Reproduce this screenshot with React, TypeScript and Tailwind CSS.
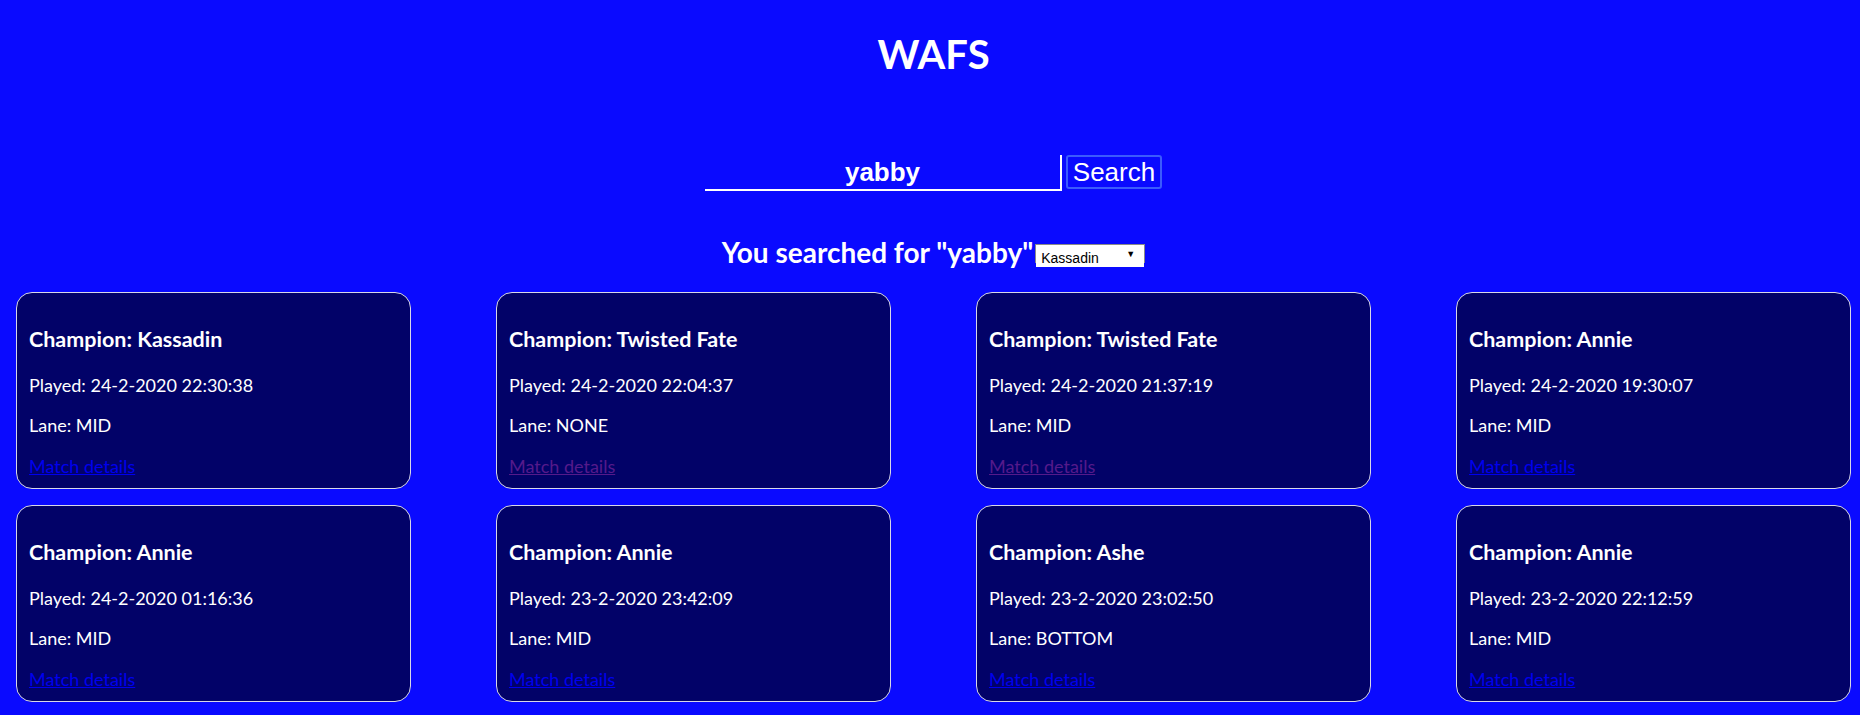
import React from "react";

const matches = [
  { champion: "Kassadin", played: "24-2-2020 22:30:38", lane: "MID", visited: false },
  { champion: "Twisted Fate", played: "24-2-2020 22:04:37", lane: "NONE", visited: true },
  { champion: "Twisted Fate", played: "24-2-2020 21:37:19", lane: "MID", visited: true },
  { champion: "Annie", played: "24-2-2020 19:30:07", lane: "MID", visited: false },
  { champion: "Annie", played: "24-2-2020 01:16:36", lane: "MID", visited: false },
  { champion: "Annie", played: "23-2-2020 23:42:09", lane: "MID", visited: false },
  { champion: "Ashe", played: "23-2-2020 23:02:50", lane: "BOTTOM", visited: false },
  { champion: "Annie", played: "23-2-2020 22:12:59", lane: "MID", visited: false },
];

const App = () => {
  return (
    <div className="min-h-[715px] w-full bg-[#0a0aff] pl-[16px] pr-[9px] pt-[30px] text-white font-['Lato',sans-serif]">
      {/* Titel */}
      <h1 className="text-center text-[40px] font-bold leading-[48px]">WAFS</h1>

      {/* Zoekformulier */}
      <form className="mt-[77px] flex items-start justify-center font-['Liberation_Sans',Arial,sans-serif]">
        <input
          type="text"
          defaultValue="yabby"
          className="h-[36px] w-[357px] border-b-2 border-r-2 border-white bg-transparent text-center text-[26px] font-bold text-white outline-none"
        />
        <button
          type="button"
          className="ml-[4px] h-[34px] w-[96px] rounded-[3px] border-2 border-[#3b5bfd] text-[26px] leading-[28px] text-white"
        >
          Search
        </button>
      </form>

      {/* Resultaat kop */}
      <div className="mt-[45px] flex items-baseline justify-center">
        <h2 className="text-[28px] font-bold leading-[32px]">You searched for "yabby"</h2>
        <div className="relative ml-[2px] h-[19px] w-[110px] border border-[#8a8a8a] bg-white">
          <select
            defaultValue="Kassadin"
            className="h-full w-full appearance-none bg-white pl-[5px] text-[14px] leading-[17px] text-black outline-none font-['Liberation_Sans',Arial,sans-serif]"
          >
            <option>Kassadin</option>
            <option>Twisted Fate</option>
            <option>Annie</option>
            <option>Ashe</option>
          </select>
          <span className="pointer-events-none absolute right-[9px] top-[3px] text-[9px] leading-[12px] text-black">
            ▼
          </span>
        </div>
      </div>

      {/* Wedstrijden */}
      <div className="mt-[24px] flex flex-wrap justify-between gap-y-[16px]">
        {matches.map((m, i) => (
          <div
            key={i}
            className="h-[197px] w-[395px] rounded-[16px] border border-[#d8d8e8] bg-[#020268] px-[12px] pt-[32px]"
          >
            <h3 className="text-[21.5px] font-bold leading-[28px]">Champion: {m.champion}</h3>
            <p className="mt-[20px] text-[18px] leading-[24px]">Played: {m.played}</p>
            <p className="mt-[16px] text-[18px] leading-[24px]">Lane: {m.lane}</p>
            <a
              href="#"
              className={
                "mt-[17px] block w-fit text-[18px] leading-[24px] underline " +
                (m.visited ? "text-[#551a8b]" : "text-[#0000ee]")
              }
            >
              Match details
            </a>
          </div>
        ))}
      </div>
    </div>
  );
};

export default App;
